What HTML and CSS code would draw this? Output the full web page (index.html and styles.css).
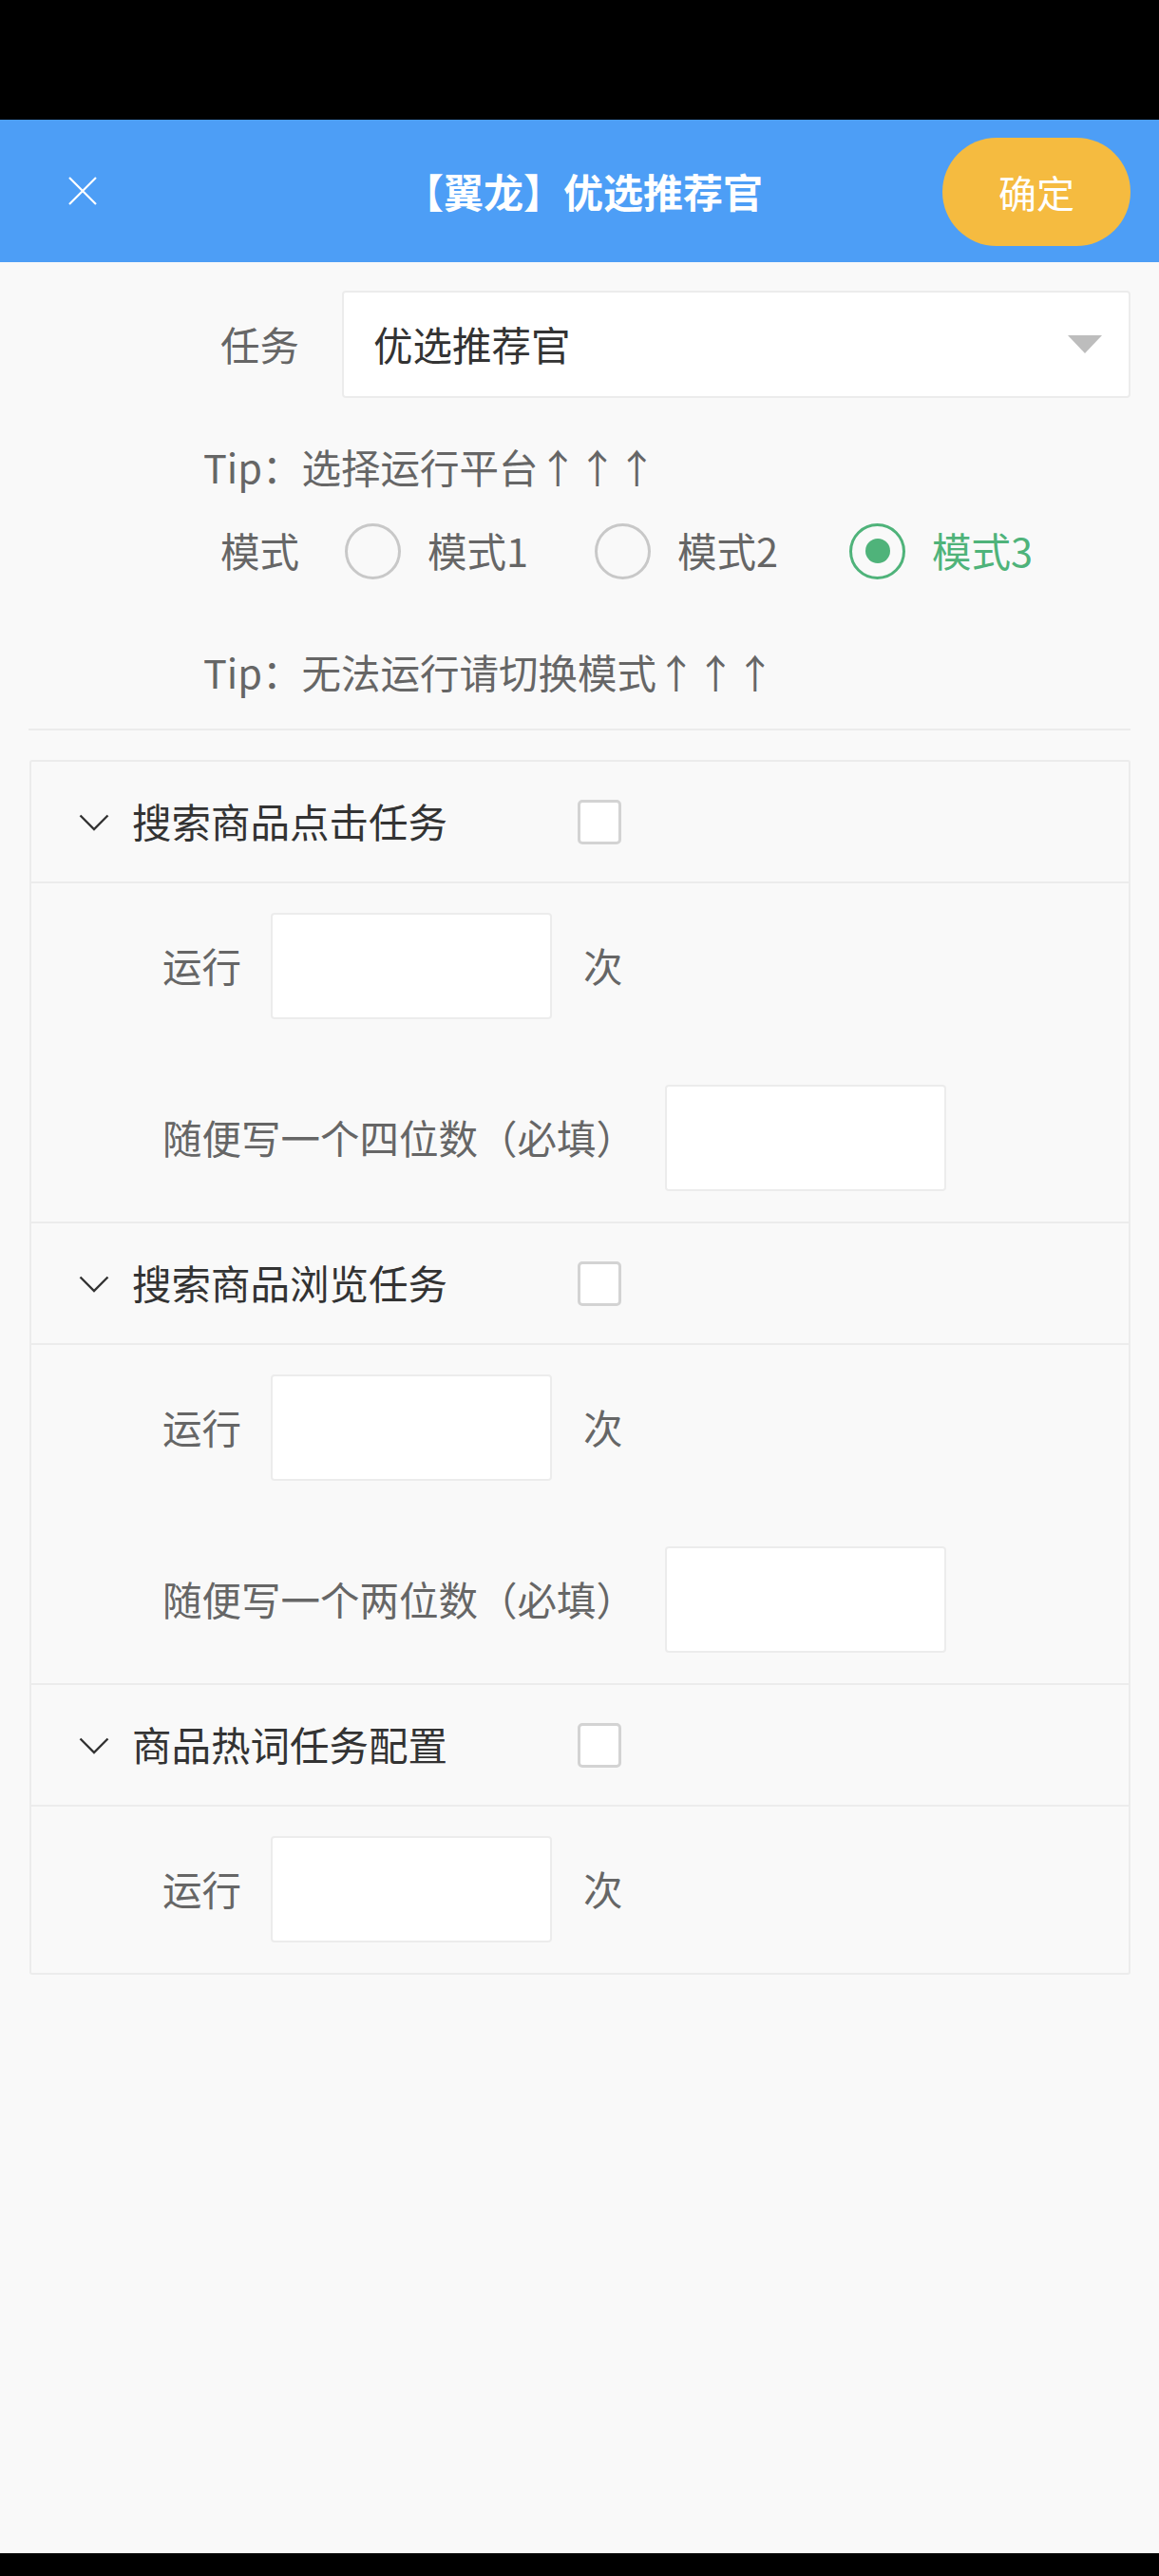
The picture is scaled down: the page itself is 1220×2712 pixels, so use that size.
FILE: index.html
```html
<!DOCTYPE html>
<html lang="zh-CN">
<head>
<meta charset="utf-8">
<title>【翼龙】优选推荐官</title>
<link rel="stylesheet" href="styles.css">
</head>
<body>
<div class="statusbar"></div>
<header class="topbar">
  <div class="topbar-left">
    <svg class="close-icon" width="30" height="30" viewBox="0 0 30 30"><path d="M1 1 L29 29 M29 1 L1 29" stroke="#fff" stroke-width="2.2" fill="none"/></svg>
  </div>
  <div class="topbar-title">【翼龙】优选推荐官</div>
  <div class="topbar-right"><button class="confirm-btn">确定</button></div>
</header>
<main class="content">
  <div class="form-row">
    <div class="form-label">任务</div>
    <div class="select">
      <span class="select-value">优选推荐官</span>
      <span class="select-arrow"></span>
    </div>
  </div>
  <div class="tip tip-first">Tip：选择运行平台↑↑↑</div>
  <div class="form-row radio-row">
    <div class="form-label">模式</div>
    <div class="radio-group">
      <label class="radio"><span class="radio-circle"></span><span class="radio-text">模式1</span></label>
      <label class="radio"><span class="radio-circle"></span><span class="radio-text">模式2</span></label>
      <label class="radio checked"><span class="radio-circle"></span><span class="radio-text">模式3</span></label>
    </div>
  </div>
  <div class="tip tip-second">Tip：无法运行请切换模式↑↑↑</div>
  <div class="divider"></div>

  <div class="card">
    <section class="section">
      <div class="section-head">
        <svg class="chevron" width="32" height="18" viewBox="0 0 32 18"><polyline points="1.5,1.5 16,16 30.5,1.5" fill="none" stroke="#333" stroke-width="2.4"/></svg>
        <span class="section-title">搜索商品点击任务</span>
        <span class="checkbox"></span>
      </div>
      <div class="section-body">
        <div class="field-row"><span class="field-label">运行</span><span class="input"></span><span class="field-unit">次</span></div>
        <div class="field-row"><span class="field-label">随便写一个四位数（必填）</span><span class="input"></span></div>
      </div>
    </section>
    <section class="section">
      <div class="section-head">
        <svg class="chevron" width="32" height="18" viewBox="0 0 32 18"><polyline points="1.5,1.5 16,16 30.5,1.5" fill="none" stroke="#333" stroke-width="2.4"/></svg>
        <span class="section-title">搜索商品浏览任务</span>
        <span class="checkbox"></span>
      </div>
      <div class="section-body">
        <div class="field-row"><span class="field-label">运行</span><span class="input"></span><span class="field-unit">次</span></div>
        <div class="field-row"><span class="field-label">随便写一个两位数（必填）</span><span class="input"></span></div>
      </div>
    </section>
    <section class="section last">
      <div class="section-head">
        <svg class="chevron" width="32" height="18" viewBox="0 0 32 18"><polyline points="1.5,1.5 16,16 30.5,1.5" fill="none" stroke="#333" stroke-width="2.4"/></svg>
        <span class="section-title">商品热词任务配置</span>
        <span class="checkbox"></span>
      </div>
      <div class="section-body">
        <div class="field-row"><span class="field-label">运行</span><span class="input"></span><span class="field-unit">次</span></div>
      </div>
    </section>
  </div>
</main>
<div class="navbar"></div>
</body>
</html>
```

FILE: styles.css
```css
* { box-sizing: border-box; }
html, body { margin: 0; padding: 0; }
body {
  width: 1220px;
  height: 2712px;
  background: #f9f9f9;
  font-family: "Noto Sans CJK SC", "Noto Sans", sans-serif;
  font-size: 41.5px;
  line-height: 1.2;
  color: #333;
  display: flex;
  flex-direction: column;
  overflow: hidden;
}
.statusbar { height: 126px; background: #000; flex: none; }
.topbar {
  height: 150px;
  flex: none;
  background: #4d9ef6;
  display: grid;
  grid-template-columns: 1fr auto 1fr;
  align-items: center;
  padding: 0 30px;
}
.topbar-left { display: flex; align-items: center; padding-left: 42px; }
.close-icon { display: block; }
.topbar-title {
  color: #fff;
  font-size: 42px;
  font-weight: 700;
  text-align: center;
  padding-left: 8px;
}
.topbar-right { display: flex; justify-content: flex-end; }
.confirm-btn {
  width: 198px;
  height: 114px;
  border: none;
  border-radius: 57px;
  background: #f5bb40;
  color: #fff;
  font-family: inherit;
  font-size: 40px;
  padding: 0;
  margin-top: 1px;
}
.content {
  flex: 1;
  padding: 30px 30px 0 30px;
}
.form-row { display: flex; align-items: center; }
.form-label {
  width: 285px;
  margin-right: 45px;
  text-align: right;
  color: #666;
}
.select {
  flex: 1;
  height: 113px;
  background: #fff;
  border: 2px solid #ececec;
  border-radius: 4px;
  display: flex;
  align-items: center;
  justify-content: space-between;
  padding: 0 28px 0 31px;
}
.select-value { color: #333; }
.select-arrow {
  width: 0; height: 0;
  border-left: 18px solid transparent;
  border-right: 18px solid transparent;
  border-top: 19px solid #bdbdbd;
}
.tip {
  height: 60px;
  line-height: 60px;
  padding-left: 184px;
  color: #666;
}
.tip-first { margin-top: 42px; }
.radio-row { margin-top: 29px; height: 60px; }
.radio-row .form-label { margin-right: 48px; }
.radio-group { display: flex; align-items: center; }
.radio { display: flex; align-items: center; margin-right: 70px; color: #666; }
.radio + .radio + .radio { margin-left: 5px; }
.radio-circle {
  width: 59px; height: 59px;
  border: 3px solid #c8c8c8;
  border-radius: 50%;
  margin-right: 28px;
  display: flex; align-items: center; justify-content: center;
}
.radio.checked { color: #4fb37a; }
.radio.checked .radio-circle { border-color: #4fb37a; }
.radio.checked .radio-circle::after {
  content: "";
  width: 26px; height: 26px;
  border-radius: 50%;
  background: #4fb37a;
}
.tip-second { margin-top: 67px; }
.divider { margin-top: 30px; height: 2px; background: #ececec; }
.card {
  margin-top: 31px;
  margin-left: 1px;
  border: 2px solid #ececec;
  border-radius: 3px;
}
.section-head {
  height: 128px;
  border-bottom: 2px solid #ececec;
  display: flex;
  align-items: center;
  padding-left: 50px;
}
.chevron { display: block; margin-right: 24px; margin-top: 2px; }
.section-title { color: #333; }
.checkbox {
  width: 46px; height: 47px;
  margin-left: 137px;
  border: 3px solid #d3d3d3;
  border-radius: 5px;
  background: #fff;
}
.section-body {
  padding: 31px 0 32px 138px;
  border-bottom: 2px solid #ececec;
  display: flex;
  flex-direction: column;
  gap: 69px;
}
.section.last .section-body { border-bottom: none; }
.field-row { display: flex; align-items: center; height: 112px; }
.field-label { color: #666; margin-right: 31px; }
.input {
  width: 296px; height: 112px;
  background: #fff;
  border: 2px solid #ececec;
  border-radius: 4px;
}
.field-unit { color: #666; margin-left: 33px; }
.navbar { height: 24px; background: #000; flex: none; }
```
